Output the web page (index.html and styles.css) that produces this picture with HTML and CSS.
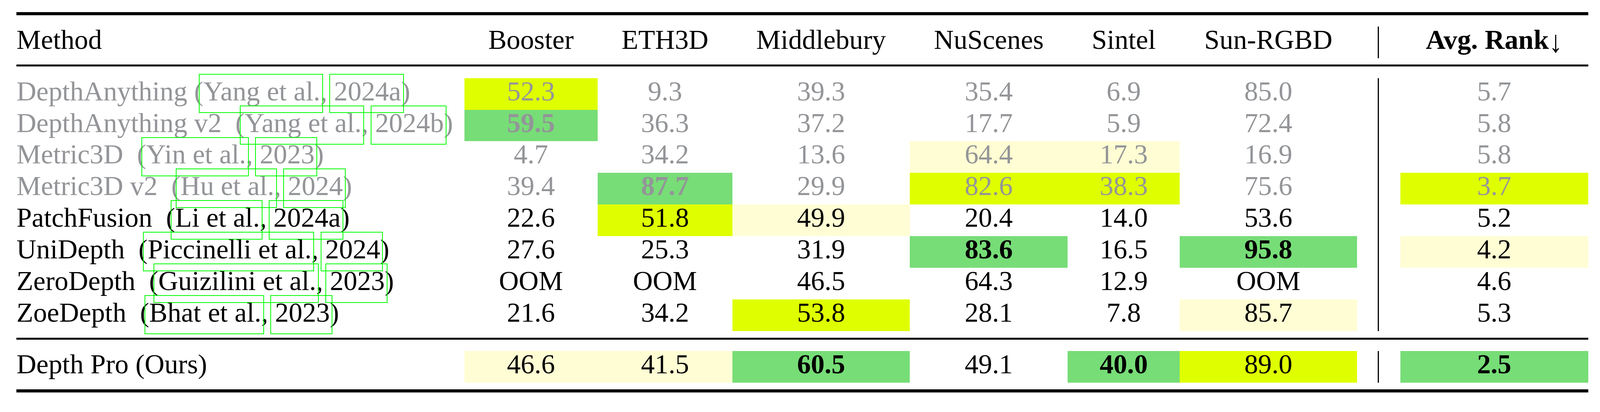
FILE: index.html
```html
<!DOCTYPE html>
<html>
<head>
<meta charset="utf-8">
<title>Table</title>
<link rel="stylesheet" href="styles.css">
</head>
<body>
<table class="tbl">
<colgroup>
<col class="w-m"><col class="w-b"><col class="w-e"><col class="w-mi"><col class="w-n"><col class="w-si"><col class="w-su"><col class="w-sep"><col class="w-r">
</colgroup>
<tr class="rule r8"><td colspan="9"></td></tr>
<tr class="gap g29"><td colspan="9"></td></tr>
<tr class="head">
<td class="m">Method</td><td>Booster</td><td>ETH3D</td><td>Middlebury</td><td>NuScenes</td><td>Sintel</td><td>Sun-RGBD</td><td class="sep"></td><td class="b">Avg. Rank<span class="arr">↓</span></td>
</tr>
<tr class="gap g17"><td colspan="9"></td></tr>
<tr class="rule r5"><td colspan="9"></td></tr>
<tr class="gap g30"><td colspan="9"></td></tr>

<tr class="row gray">
<td class="m">DepthAnything (<span class="c">Yang et al.</span>, <span class="c">2024a</span>)</td>
<td class="y">52.3</td><td>9.3</td><td>39.3</td><td>35.4</td><td>6.9</td><td>85.0</td><td class="sep"></td><td>5.7</td>
</tr>
<tr class="row gray">
<td class="m">DepthAnything v2&nbsp; (<span class="c">Yang et al.</span>, <span class="c">2024b</span>)</td>
<td class="g b">59.5</td><td>36.3</td><td>37.2</td><td>17.7</td><td>5.9</td><td>72.4</td><td class="sep"></td><td>5.8</td>
</tr>
<tr class="row gray">
<td class="m">Metric3D&nbsp; (<span class="c">Yin et al.</span>, <span class="c">2023</span>)</td>
<td>4.7</td><td>34.2</td><td>13.6</td><td class="l">64.4</td><td class="l">17.3</td><td>16.9</td><td class="sep"></td><td>5.8</td>
</tr>
<tr class="row gray">
<td class="m">Metric3D v2&nbsp; (<span class="c">Hu et al.</span>, <span class="c">2024</span>)</td>
<td>39.4</td><td class="g b">87.7</td><td>29.9</td><td class="y">82.6</td><td class="y">38.3</td><td>75.6</td><td class="sep"></td><td class="y">3.7</td>
</tr>
<tr class="row">
<td class="m">PatchFusion&nbsp; (<span class="c">Li et al.</span>, <span class="c">2024a</span>)</td>
<td>22.6</td><td class="y">51.8</td><td class="l">49.9</td><td>20.4</td><td>14.0</td><td>53.6</td><td class="sep"></td><td>5.2</td>
</tr>
<tr class="row">
<td class="m">UniDepth&nbsp; (<span class="c">Piccinelli et al.</span>, <span class="c">2024</span>)</td>
<td>27.6</td><td>25.3</td><td>31.9</td><td class="g b">83.6</td><td>16.5</td><td class="g b">95.8</td><td class="sep"></td><td class="l">4.2</td>
</tr>
<tr class="row">
<td class="m">ZeroDepth&nbsp; (<span class="c">Guizilini et al.</span>, <span class="c">2023</span>)</td>
<td>OOM</td><td>OOM</td><td>46.5</td><td>64.3</td><td>12.9</td><td>OOM</td><td class="sep"></td><td>4.6</td>
</tr>
<tr class="row">
<td class="m">ZoeDepth&nbsp; (<span class="c">Bhat et al.</span>, <span class="c">2023</span>)</td>
<td>21.6</td><td>34.2</td><td class="y">53.8</td><td>28.1</td><td>7.8</td><td class="l">85.7</td><td class="sep"></td><td>5.3</td>
</tr>

<tr class="gap g18"><td colspan="9"></td></tr>
<tr class="rule r5"><td colspan="9"></td></tr>
<tr class="gap g29"><td colspan="9"></td></tr>
<tr class="row">
<td class="m">Depth Pro (Ours)</td>
<td class="l">46.6</td><td class="l">41.5</td><td class="g b">60.5</td><td>49.1</td><td class="g b">40.0</td><td class="y">89.0</td><td class="sep"></td><td class="g b">2.5</td>
</tr>
<tr class="gap g18"><td colspan="9"></td></tr>
<tr class="rule r8"><td colspan="9"></td></tr>
</table>
</body>
</html>
```

FILE: styles.css
```css
:root {
  --u: calc(100vw / 4166);
}

html, body {
  margin: 0;
  padding: 0;
  background: #ffffff;
  overflow: hidden;
}

.tbl {
  border-collapse: collapse;
  table-layout: fixed;
  width: calc(4092 * var(--u));
  margin: calc(32 * var(--u)) 0 0 calc(43 * var(--u));
  font-family: "Liberation Serif", "Times New Roman", serif;
  font-size: calc(71.5 * var(--u));
  color: #000000;
}

.w-m { width: calc(1166 * var(--u)); }
.w-b { width: calc(347 * var(--u)); }
.w-e { width: calc(351 * var(--u)); }
.w-mi { width: calc(462 * var(--u)); }
.w-n { width: calc(411 * var(--u)); }
.w-si { width: calc(292 * var(--u)); }
.w-su { width: calc(461 * var(--u)); }
.w-sep { width: calc(113 * var(--u)); }
.w-r { width: calc(489 * var(--u)); }

.tbl td {
  padding: 0;
  border: 0;
  vertical-align: top;
  text-align: center;
  white-space: nowrap;
}

.head td,
.row td {
  height: calc(82.25 * var(--u));
  line-height: calc(68 * var(--u));
}

.tbl td.m {
  text-align: left;
}

.rule td,
.gap td {
  font-size: 0;
  line-height: 0;
}

.r8 td { height: calc(8 * var(--u)); background: #000000; }
.r5 td { height: calc(5 * var(--u)); background: #000000; }
.g29 td { height: calc(29 * var(--u)); }
.g17 td { height: calc(17 * var(--u)); }
.g30 td { height: calc(30 * var(--u)); }
.g18 td { height: calc(18 * var(--u)); }

.tbl td.sep {
  background: linear-gradient(#000000, #000000) no-repeat;
  background-position: calc(54 * var(--u)) 0;
  background-size: calc(3.5 * var(--u)) 100%;
}

.gray td {
  color: #939598;
}

.b {
  font-weight: bold;
}

.arr {
  font-weight: normal;
  display: inline-block;
  transform: translateY(0.08em) scaleY(1.12);
}

.tbl td.y { background: #dfff00; }
.tbl td.g { background: #77dd77; }
.tbl td.l { background: #fffdd3; }

.c {
  position: relative;
}

.c::after {
  content: "";
  position: absolute;
  left: calc(-12 * var(--u));
  right: calc(-7 * var(--u));
  top: calc(-5 * var(--u));
  bottom: calc(-18 * var(--u));
  border: calc(2.1 * var(--u)) solid #00ff00;
}
```
